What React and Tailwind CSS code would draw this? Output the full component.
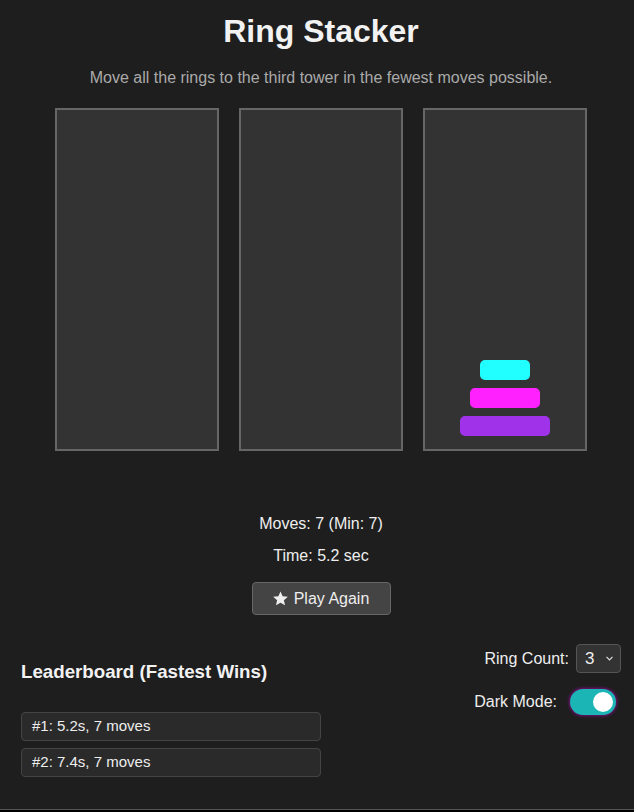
import React from "react";

const rings = [
  { w: "w-[50px]", color: "bg-[#22ffff]" },
  { w: "w-[70px]", color: "bg-[#ff22ff]" },
  { w: "w-[90px]", color: "bg-[#a033ea]" },
];

const leaderboard = ["#1: 5.2s, 7 moves", "#2: 7.4s, 7 moves"];

const Tower = ({ children }) => (
  <div className="w-[164px] h-[343px] bg-[#333333] border-2 border-[#666666] flex flex-col items-center justify-end gap-2 pb-[13px]">
    {children}
  </div>
);

const Star = () => (
  <svg width="15" height="15" viewBox="0 0 24 24" fill="currentColor">
    <path d="M12 0.8l3.4 7.6 8.3.8-6.3 5.5 1.9 8.2L12 18.6 4.7 22.9l1.9-8.2L0.3 9.2l8.3-.8z" />
  </svg>
);

export default function App() {
  return (
    <div className="w-full min-h-[812px] bg-[#1e1e1e] text-[#eeeeee] font-['Liberation_Sans',Arial,sans-serif] flex flex-col">
      <div className="h-[809px] pl-[8px] flex flex-col">
        {/* Header */}
        <div className="flex flex-col items-center">
          <h1 className="mt-[13px] text-[32px] leading-[36px] font-bold text-[#f2f2f2]">
            Ring Stacker
          </h1>
          <p className="mt-[19px] text-[16px] leading-[20px] text-[#aaaaaa]">
            Move all the rings to the third tower in the fewest moves possible.
          </p>
        </div>

        {/* Towers */}
        <div className="mt-[20px] flex justify-center gap-[20px]">
          <Tower />
          <Tower />
          <Tower>
            {rings.map((r, i) => (
              <div key={i} className={`${r.w} ${r.color} h-[20px] rounded-[5px]`} />
            ))}
          </Tower>
        </div>

        {/* Stats */}
        <div className="flex flex-col items-center">
          <p className="mt-[63px] text-[16px] leading-[20px]">Moves: 7 (Min: 7)</p>
          <p className="mt-[12px] text-[16px] leading-[20px]">Time: 5.2 sec</p>
          <button
            type="button"
            className="mt-[16px] w-[139px] h-[33px] flex items-center justify-center gap-[6px] bg-[#444444] border border-[#666666] rounded-[4px] text-[16px] leading-[20px] text-[#eeeeee]"
          >
            <Star />
            <span>Play Again</span>
          </button>
        </div>

        {/* Bottom section */}
        <div className="mt-[29px] px-[13px] flex justify-between items-start">
          <div className="flex flex-col">
            <h3 className="mt-[17px] text-[18.72px] leading-[22px] font-bold text-[#f2f2f2]">
              Leaderboard (Fastest Wins)
            </h3>
            <div className="mt-[29px] flex flex-col gap-[7px]">
              {leaderboard.map((item) => (
                <div
                  key={item}
                  className="w-[300px] bg-[#2a2a2a] border border-[#444444] rounded-[4px] pl-[10px] pt-[4px] pb-[6px] text-[15px] leading-[17px]"
                >
                  {item}
                </div>
              ))}
            </div>
          </div>

          <div className="flex flex-col items-end gap-[14px]">
            <div className="h-[29px] flex items-center gap-[7px]">
              <span className="text-[16px] leading-[20px]">Ring Count:</span>
              <div className="w-[45px] h-[29px] bg-[#333333] border border-[#555555] rounded-[4px] flex items-center justify-between pl-[8px] pr-[7px]">
                <span className="text-[17px] leading-[20px]">3</span>
                <svg width="7" height="5" viewBox="0 0 7 5" fill="none" stroke="#dddddd" strokeWidth="1.2">
                  <path d="M0.5 0.8l3 3 3-3" />
                </svg>
              </div>
            </div>
            <div className="h-[29px] flex items-center gap-[13px]">
              <span className="text-[16px] leading-[20px]">Dark Mode:</span>
              <div className="mr-[5px] w-[46px] h-[26px] rounded-full bg-[#1bb5b5] shadow-[0_0_3px_1px_rgba(200,0,200,0.55)] flex items-center justify-end pr-[3px]">
                <div className="w-[20px] h-[20px] rounded-full bg-white" />
              </div>
            </div>
          </div>
        </div>
      </div>
      <div className="h-[3px] border-t border-[#555555] bg-black" />
    </div>
  );
}
